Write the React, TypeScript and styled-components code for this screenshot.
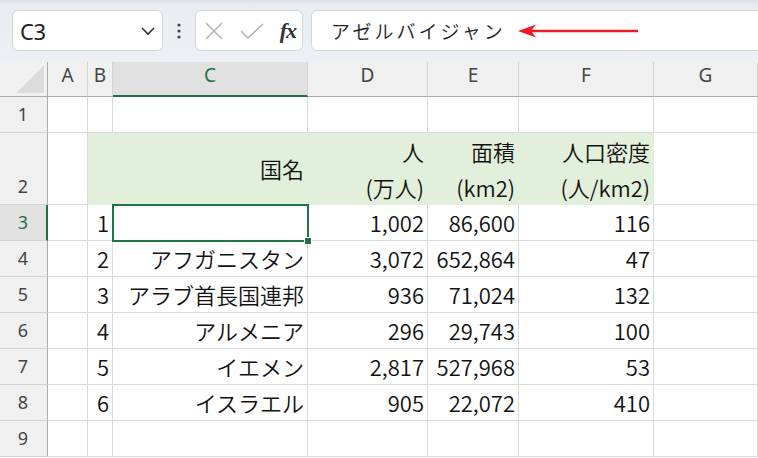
import React from 'react'
import styled, {createGlobalStyle, css} from 'styled-components'

const GlobalStyle = createGlobalStyle`
  html,body{margin:0;padding:0;background:#fff;}
  body{font-family:"Noto Sans CJK JP","Noto Sans",sans-serif;}
`

const Page = styled.div`
  width:758px;
  height:458px;
  overflow:hidden;
  display:flex;
  flex-direction:column;
`

const Toolbar = styled.div`
  height:62px;
  flex:none;
  box-sizing:border-box;
  background:linear-gradient(#dde1e6 0, #e9edf1 5px, #eceff3 100%);
  display:flex;
  align-items:flex-start;
  padding:10px 0 0 12px;
`

const Box = styled.div`
  height:41px;
  box-sizing:border-box;
  background:#fff;
  border:1px solid #d3d7dc;
  border-radius:6px;
  display:flex;
  align-items:center;
`

const NameBox = styled(Box)`
  width:151px;
  padding:0 6px 0 7px;
  justify-content:space-between;
  font-family:"Noto Sans",sans-serif;
  font-size:22px;
  letter-spacing:-0.5px;
  color:#222;
`

const Dots = styled.div`
  width:32px;
  height:41px;
  display:flex;
  align-items:center;
  justify-content:center;
`

const FxBox = styled(Box)`
  width:108px;
  padding:0 6px 0 8px;
  justify-content:space-between;
`

const Fx = styled.span`
  font-family:"Liberation Serif",serif;
  font-style:italic;
  font-weight:bold;
  font-size:22px;
  color:#333;
  letter-spacing:-1px;
`

const FormulaBox = styled(Box)`
  flex:1;
  margin:0 -10px 0 8px;
  padding-left:19px;
  font-size:19px;
  font-weight:350;
  letter-spacing:3px;
  color:#222;
  gap:12px;
`

const Sheet = styled.div`
  display:grid;
  grid-template-columns:48px 40px 25px 195px 120px 91px 135px 104px;
  grid-template-rows:35px 36px 72px repeat(7,36px);
`

const Corner = styled.div`
  box-sizing:border-box;
  background:#f0f0f0;
  border-right:1px solid #ababab;
  border-bottom:1px solid #ababab;
  display:flex;
  align-items:flex-end;
  justify-content:flex-end;
  padding:0 3px 3px 0;
`

const ColHead = styled.div<{$active?:boolean}>`
  box-sizing:border-box;
  background:${p=>p.$active?'#e1e1e1':'#f0f0f0'};
  border-right:1px solid #d4d4d4;
  border-bottom:${p=>p.$active?'2px solid #1e7145':'1px solid #ababab'};
  display:flex;
  align-items:center;
  justify-content:center;
  padding-bottom:${p=>p.$active?'7px':'8px'};
  font-family:"Noto Sans",sans-serif;
  font-size:19px;
  color:${p=>p.$active?'#1e7145':'#444'};
`

const RowHead = styled.div<{$active?:boolean}>`
  box-sizing:border-box;
  background:${p=>p.$active?'#e1e1e1':'#f0f0f0'};
  border-right:${p=>p.$active?'2px solid #1e7145':'1px solid #ababab'};
  border-bottom:1px solid #d4d4d4;
  display:flex;
  align-items:flex-end;
  justify-content:center;
  padding-right:${p=>p.$active?'0':'1px'};
  font-family:"Noto Sans",sans-serif;
  font-size:18px;
  line-height:35px;
  color:${p=>p.$active?'#1e7145':'#444'};
`

const Cell = styled.div<{$fill?:boolean;$mid?:boolean;$selected?:boolean}>`
  position:relative;
  box-sizing:border-box;
  background:${p=>p.$fill?'#e2efda':'#fff'};
  border-right:1px solid ${p=>p.$fill?'#e2efda':'#dadada'};
  border-bottom:1px solid ${p=>p.$fill?'#e2efda':'#dadada'};
  display:flex;
  flex-direction:column;
  justify-content:${p=>p.$mid?'center':'flex-end'};
  align-items:flex-end;
  padding-right:3px;
  font-size:22px;
  font-weight:350;
  line-height:35px;
  color:#111;
  white-space:nowrap;
  ${p=>p.$selected && css`
    &::after{
      content:'';
      position:absolute;
      top:-1px;left:-1px;right:-2px;bottom:-2px;
      border:2px solid #217346;
      z-index:2;
    }
    &::before{
      content:'';
      position:absolute;
      right:-5px;bottom:-5px;
      width:6px;height:6px;
      background:#217346;
      border:1px solid #fff;
      z-index:3;
    }
  `}
`

const Line = styled.span`
  display:block;
  line-height:36px;
`

type Value = string | string[]

const rows: {n:number;cells:Value[]}[] = [
  {n:1, cells:['','','','','','','']},
  {n:2, cells:['','','国名',['人','(万人)'],['面積','(km2)'],['人口密度','(人/km2)'],'']},
  {n:3, cells:['','1','','1,002','86,600','116','']},
  {n:4, cells:['','2','アフガニスタン','3,072','652,864','47','']},
  {n:5, cells:['','3','アラブ首長国連邦','936','71,024','132','']},
  {n:6, cells:['','4','アルメニア','296','29,743','100','']},
  {n:7, cells:['','5','イエメン','2,817','527,968','53','']},
  {n:8, cells:['','6','イスラエル','905','22,072','410','']},
  {n:9, cells:['','','','','','','']},
]

const cols = ['A','B','C','D','E','F','G']

function App() {
  return (
    <Page>
      <GlobalStyle/>
      <Toolbar>
        <NameBox>
          <span>C3</span>
          <svg width="16" height="10" viewBox="0 0 16 10">
            <path d="M2 2 L8 8 L14 2" fill="none" stroke="#333" strokeWidth="1.6"/>
          </svg>
        </NameBox>
        <Dots>
          <svg width="4" height="16" viewBox="0 0 4 16">
            <circle cx="2" cy="2" r="1.6" fill="#444"/>
            <circle cx="2" cy="8" r="1.6" fill="#444"/>
            <circle cx="2" cy="14" r="1.6" fill="#444"/>
          </svg>
        </Dots>
        <FxBox>
          <svg width="20" height="20" viewBox="0 0 20 20">
            <path d="M2 2 L18 18 M18 2 L2 18" stroke="#b3b3b3" strokeWidth="1.5"/>
          </svg>
          <svg width="24" height="20" viewBox="0 0 24 20">
            <path d="M1 10 L8 17 L23 3" fill="none" stroke="#b3b3b3" strokeWidth="1.5"/>
          </svg>
          <Fx>fx</Fx>
        </FxBox>
        <FormulaBox>
          <span>アゼルバイジャン</span>
          <svg width="122" height="14" viewBox="0 0 122 14">
            <path d="M12 7 L120 7" stroke="#ee1c25" strokeWidth="2.5"/>
            <path d="M0 7 L18 0.5 L13 7 L18 13.5 Z" fill="#ee1c25"/>
          </svg>
        </FormulaBox>
      </Toolbar>
      <Sheet>
        <Corner>
          <svg width="28" height="28" viewBox="0 0 28 28">
            <path d="M28 0 L28 28 L0 28 Z" fill="#dcdcdc"/>
          </svg>
        </Corner>
        {cols.map(c=><ColHead key={c} $active={c==='C'}>{c}</ColHead>)}
        {rows.map(r=>(
          <React.Fragment key={r.n}>
            <RowHead $active={r.n===3}>{r.n}</RowHead>
            {r.cells.map((v,i)=>{
              const fill = r.n===2 && i>=1 && i<=5
              return (
                <Cell key={i} $fill={fill} $mid={r.n===2} $selected={r.n===3 && i===2}>
                  {Array.isArray(v) ? v.map(t=><Line key={t}>{t}</Line>) : v}
                </Cell>
              )
            })}
          </React.Fragment>
        ))}
      </Sheet>
    </Page>
  )
}

export default App
